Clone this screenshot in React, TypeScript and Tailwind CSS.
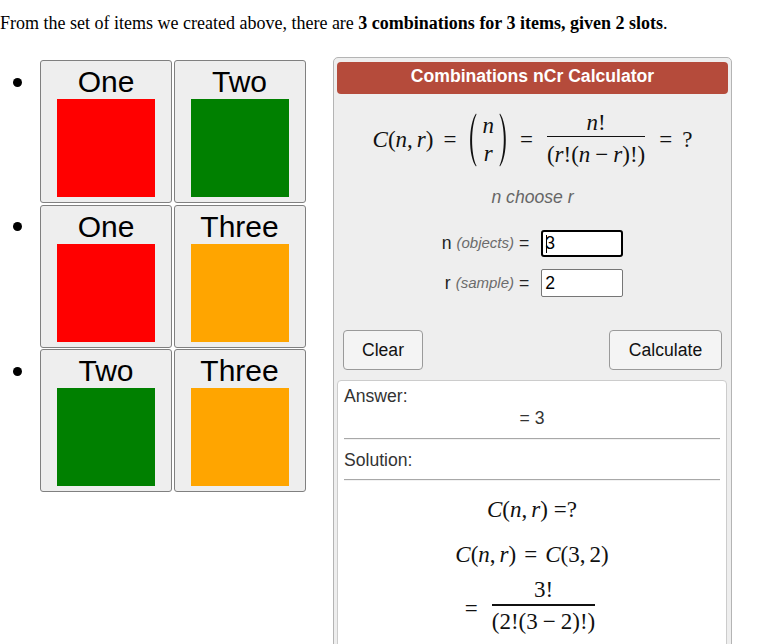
const sans = "font-['Liberation_Sans','Arial',sans-serif]";
const serif = "font-['Liberation_Serif','Times_New_Roman',serif]";

const rows = [
  [
    { label: "One", color: "bg-[#ff0000]" },
    { label: "Two", color: "bg-[#008000]" },
  ],
  [
    { label: "One", color: "bg-[#ff0000]" },
    { label: "Three", color: "bg-[#ffa500]" },
  ],
  [
    { label: "Two", color: "bg-[#008000]" },
    { label: "Three", color: "bg-[#ffa500]" },
  ],
];

function ItemBox({ label, color }: { label: string; color: string }) {
  return (
    <div className="flex h-[143px] w-[132px] flex-col items-center rounded-[3px] border border-[#808080] bg-[#eeeeee] pt-[4px]">
      <span className={`${sans} text-[30px] leading-[34px] text-black`}>{label}</span>
      <div className={`h-[98px] w-[98px] ${color}`} />
    </div>
  );
}

function Paren({ side }: { side: "left" | "right" }) {
  return (
    <svg width="11" height="54" viewBox="0 0 10 54" className={side === "right" ? "-scale-x-100" : ""}>
      <path d="M9.5 0.5 C2 11 1.5 43 9.5 53.5 L10 52.8 C4.2 41 4.2 13 10 1.2 Z" fill="#111" />
    </svg>
  );
}

function Frac({
  num,
  den,
  numCls,
  denCls,
}: {
  num: React.ReactNode;
  den: React.ReactNode;
  numCls: string;
  denCls: string;
}) {
  return (
    <span className="inline-flex flex-col items-center px-[4px]">
      <span className={numCls}>{num}</span>
      <span className="h-[1.5px] self-stretch bg-[#111]" />
      <span className={denCls}>{den}</span>
    </span>
  );
}

function Cnr() {
  return (
    <span className="whitespace-nowrap">
      <i>C</i>(<i>n</i>,<span className="ml-[4px]" />
      <i>r</i>)
    </span>
  );
}

function InputRowLabel({ v, hint }: { v: string; hint: string }) {
  return (
    <div className="flex items-center justify-end text-[#222]">
      <span className="text-[17.6px]">{v}</span>
      <span className="ml-[5px] text-[15px] italic text-[#6b6b6b]">{hint}</span>
      <span className="ml-[5px] text-[17.6px]">=</span>
    </div>
  );
}

function CalcPanel() {
  return (
    <div className={`${sans} ml-[27px] w-[399px] rounded-[5px] border border-[#b4b4b4] bg-[#eeeeee] px-[3px] pt-[4px]`}>
      <div className="flex h-[32px] items-center justify-center rounded-[4px] bg-[#b54b3b] pb-[3px] text-[17.6px] font-bold text-white">
        Combinations nCr Calculator
      </div>

      <div className={`${serif} mt-[16px] flex h-[60px] items-center justify-center text-[23px] text-[#111]`}>
        <Cnr />
        <span className="mx-[10px]">=</span>
        <span className="flex items-center">
          <Paren side="left" />
          <span className="flex h-[54px] flex-col items-center justify-between px-[5px] leading-[26px]">
            <i>n</i>
            <i>r</i>
          </span>
          <Paren side="right" />
        </span>
        <span className="mx-[10px]">=</span>
        <Frac
          num={
            <>
              <i>n</i>!
            </>
          }
          den={
            <>
              (<i>r</i>!(<i>n</i>
              <span className="mx-[5px]">−</span>
              <i>r</i>)!)
            </>
          }
          numCls="mb-[1px] leading-[24px]"
          denCls="mt-[4px] leading-[28px]"
        />
        <span className="mx-[10px]">=</span>
        <span>?</span>
      </div>

      <div className="mt-[17px] text-center text-[17.6px] leading-[20px] italic text-[#666666]">n choose r</div>

      <div className="mt-[23px] grid grid-cols-[auto_auto] justify-center gap-x-[12px] gap-y-[12px]">
        <InputRowLabel v="n" hint="(objects)" />
        <div className="relative">
          <input
            readOnly
            value="3"
            className="h-[27px] w-[82px] rounded-[3px] border-2 border-black bg-white px-[2px] text-[17.6px] text-black outline-none"
          />
          <span className="absolute left-[5px] top-[5px] h-[18px] w-px bg-black" />
        </div>
        <InputRowLabel v="r" hint="(sample)" />
        <input
          readOnly
          value="2"
          className="h-[28px] w-[82px] rounded-[2px] border border-[#767676] bg-white px-[3px] text-[17.6px] text-black outline-none"
        />
      </div>

      <div className="mt-[33px] flex justify-between px-[6px]">
        <button className="h-[40px] w-[80px] rounded-[4px] border border-[#9a9a9a] bg-[#f4f4f4] text-[17.6px] text-[#111]">
          Clear
        </button>
        <button className="h-[40px] w-[113px] rounded-[4px] border border-[#9a9a9a] bg-[#f4f4f4] text-[17.6px] text-[#111]">
          Calculate
        </button>
      </div>

      <div className="mr-[1px] mt-[10px] rounded-t-[4px] border border-[#cccccc] bg-white px-[6px] pb-[24px] pt-[5px] text-[17.6px] leading-[20px] text-[#333]">
        <div>Answer:</div>
        <div className="mt-[2px] text-center">= 3</div>
        <div className="mt-[10px] h-[2px] border-t border-[#a8a8a8] bg-[#f2f2f2]" />
        <div className="mt-[10px]">Solution:</div>
        <div className="mt-[9px] h-[2px] border-t border-[#a8a8a8] bg-[#f2f2f2]" />

        <div className={`${serif} text-[23px] text-[#111]`}>
          <div className="mt-[14px] flex h-[30px] items-center justify-center">
            <Cnr />
            <span className="ml-[6px]">=?</span>
          </div>
          <div className="mt-[15px] flex h-[30px] items-center justify-center">
            <Cnr />
            <span className="mx-[8px]">=</span>
            <span>
              <i>C</i>(3,<span className="ml-[4px]" />2)
            </span>
          </div>
          <div className="mt-[8px] flex items-center justify-center">
            <span className="mr-[10px] mt-[4px]">=</span>
            <Frac
              num="3!"
              den={
                <>
                  (2!(3<span className="mx-[5px]">−</span>2)!)
                </>
              }
              numCls="mb-[2px] leading-[24px]"
              denCls="mt-[2px] leading-[28px]"
            />
          </div>
        </div>
      </div>
    </div>
  );
}

export default function App() {
  return (
    <div className="min-h-screen bg-white text-black">
      <p className={`${serif} pt-[13px] text-[18px] leading-[20px]`}>
        From the set of items we created above, there are <b>3 combinations for 3 items, given 2 slots</b>.
      </p>

      <div className="mt-[24px] flex items-start">
        <ul className="mt-[3px] flex w-[306px] flex-col gap-[1.5px]">
          {rows.map((pair, i) => (
            <li key={i} className="flex">
              <div className="w-[40px]">
                <div className="ml-[13px] mt-[17.5px] h-[9px] w-[9px] rounded-full bg-black" />
              </div>
              <div className="flex gap-[1.5px]">
                {pair.map((item, j) => (
                  <ItemBox key={j} label={item.label} color={item.color} />
                ))}
              </div>
            </li>
          ))}
        </ul>
        <CalcPanel />
      </div>
    </div>
  );
}
